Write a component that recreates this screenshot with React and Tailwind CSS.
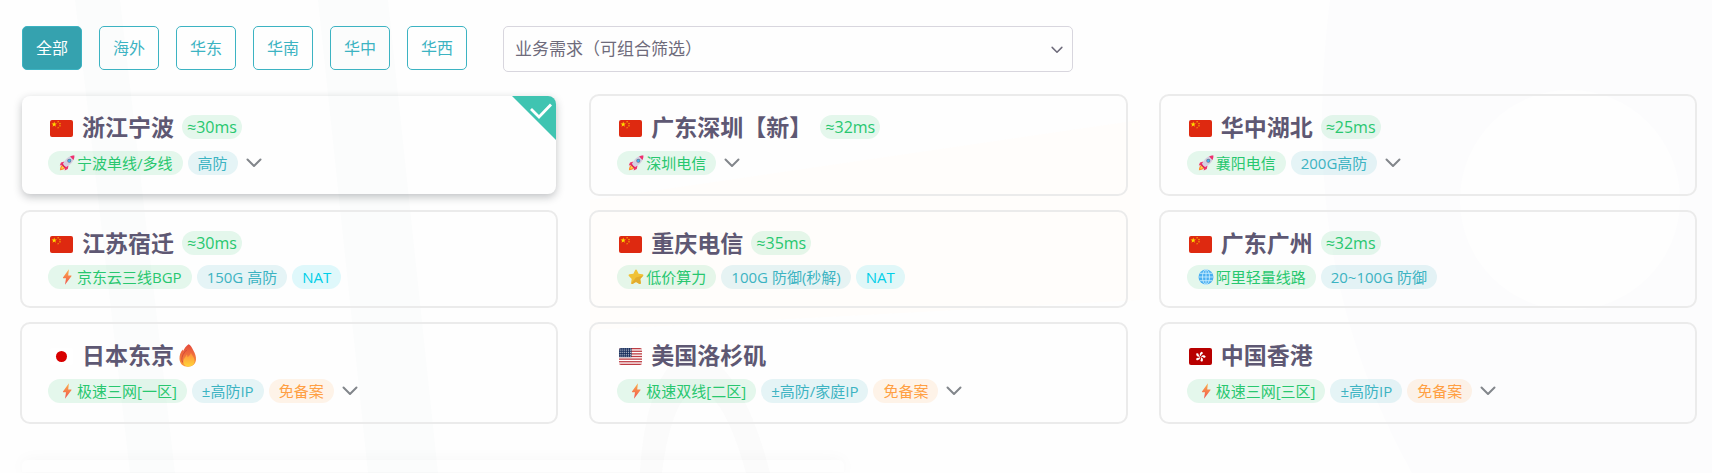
import { useState } from 'react';

const REGIONS = ['全部', '海外', '华东', '华南', '华中', '华西'];

const NODES = [
    { name: '浙江宁波', flag: 'cn', ping: '≈30ms', more: true, tags: [['宁波单线/多线', 'green', 'rocket'], ['高防', 'teal']] },
    { name: '广东深圳【新】', flag: 'cn', ping: '≈32ms', more: true, tags: [['深圳电信', 'green', 'rocket']] },
    { name: '华中湖北', flag: 'cn', ping: '≈25ms', more: true, tags: [['襄阳电信', 'green', 'rocket'], ['200G高防', 'teal']] },
    { name: '江苏宿迁', flag: 'cn', ping: '≈30ms', tags: [['京东云三线BGP', 'green', 'bolt'], ['150G 高防', 'teal'], ['NAT', 'cyan']] },
    { name: '重庆电信', flag: 'cn', ping: '≈35ms', tags: [['低价算力', 'green', 'star'], ['100G 防御(秒解)', 'teal'], ['NAT', 'cyan']] },
    { name: '广东广州', flag: 'cn', ping: '≈32ms', tags: [['阿里轻量线路', 'green', 'globe'], ['20~100G 防御', 'teal']] },
    { name: '日本东京', flag: 'jp', hot: true, more: true, tags: [['极速三网[一区]', 'green', 'bolt'], ['±高防IP', 'teal'], ['免备案', 'orange']] },
    { name: '美国洛杉矶', flag: 'us', more: true, tags: [['极速双线[二区]', 'green', 'bolt'], ['±高防/家庭IP', 'teal'], ['免备案', 'orange']] },
    { name: '中国香港', flag: 'hk', more: true, tags: [['极速三网[三区]', 'green', 'bolt'], ['±高防IP', 'teal'], ['免备案', 'orange']] },
];

const TONES = {
    green: 'bg-[#28c76f]/12 text-[#28c76f]',
    teal: 'bg-[#35b0c0]/12 text-[#3cb3c2]',
    cyan: 'bg-[#00cfe8]/12 text-[#00cfe8]',
    orange: 'bg-[#ff9f43]/12 text-[#ff9f43]',
};

const STAR = 'M0-1 .225-.309 .951-.309 .363.118 .588.809 0 .382-.588.809-.363.118-.951-.309-.225-.309Z';

function Flag({ country }) {
    return (
        <svg className="mt-[3px] w-[23px] h-[17px] shrink-0 rounded-[2px]" viewBox="0 0 23 17" aria-hidden="true">
            {country === 'cn' && (
                <>
                    <rect width="23" height="17" fill="#de2910" />
                    <g fill="#ffde00">
                        <path d={STAR} transform="translate(4.2 4.3) scale(2.9)" />
                        <path d={STAR} transform="translate(8.1 1.8) scale(1)" />
                        <path d={STAR} transform="translate(10 3.6) scale(1)" />
                        <path d={STAR} transform="translate(10 5.9) scale(1)" />
                        <path d={STAR} transform="translate(8.1 7.7) scale(1)" />
                    </g>
                </>
            )}
            {country === 'jp' && (
                <>
                    <rect width="23" height="17" fill="#fff" />
                    <circle cx="11.5" cy="8.5" r="5.5" fill="#d80000" />
                </>
            )}
            {country === 'us' && (
                <>
                    <rect width="23" height="17" fill="#fff" />
                    {[0, 1, 2, 3, 4, 5, 6].map((i) => (
                        <rect key={i} y={i * 2.615} width="23" height="1.308" fill="#bd3d44" />
                    ))}
                    <rect width="12.5" height="9.15" fill="#192f5d" />
                    {[0, 1, 2, 3, 4].map((row) =>
                        [0, 1, 2, 3, 4, 5].map((col) => (
                            <circle key={`${row}-${col}`} cx={1.1 + col * 2.05} cy={1 + row * 1.75} r=".5" fill="#fff" />
                        ))
                    )}
                </>
            )}
            {country === 'hk' && (
                <>
                    <rect width="23" height="17" fill="#b80000" />
                    {[0, 72, 144, 216, 288].map((angle) => (
                        <path key={angle} d="M0-.5C-1.8-1.6-1.8-4.200.2-5.200 1.300-4.900 1.700-3.800 1.200-3 .3-2.800.2-1.600 0-.5Z" transform={`translate(11.5 8.7) rotate(${angle + 14})`} fill="#fff" />
                    ))}
                </>
            )}
        </svg>
    );
}

function TagIcon({ kind }) {
    return (
        <svg className="size-4 shrink-0" viewBox="0 0 16 16" aria-hidden="true">
            {kind === 'rocket' && (
                <>
                    <path d="M5.5 6.5 2 7.5.8 10.5l3.5-.7ZM9.5 10.5 8.8 14 5.7 15.4l.6-3.8Z" fill="#f0306e" />
                    <path d="M3.8 9.6C2 10.3 1 12.6.9 15.2c2.5 0 4.8-1 5.6-2.7Z" fill="#ff8a2b" />
                    <path d="M3.8 11c-1 .5-1.5 1.6-1.6 2.8 1.3 0 2.4-.5 2.9-1.4Z" fill="#ffd54a" />
                    <path d="M15.4.6C11 .5 7 3 4 8.8L7.2 12C13 9 15.5 5 15.4.6Z" fill="#d5cee0" />
                    <path d="M15.4.6c-1.6 0-3 .2-4.3.9l3.4 3.4c.7-1.4 1-2.8.9-4.3Z" fill="#f0306e" />
                    <path d="m3.6 8.8 3.6 3.6-1.3.9L2.7 10Z" fill="#d62563" />
                    <circle cx="10.3" cy="5.7" r="2" fill="#6c7790" />
                    <circle cx="10.3" cy="5.7" r="1.3" fill="#43b4f2" />
                </>
            )}
            {kind === 'bolt' && (
                <>
                    <defs>
                        <linearGradient id="bolt" x1="0" y1="0" x2="0" y2="1">
                            <stop offset="0" stopColor="#fcb04a" />
                            <stop offset="1" stopColor="#f0504e" />
                        </linearGradient>
                    </defs>
                    <path d="M9.900.3 4 8.500c-.2.400 0 .8.400.8h2.600L6 15.800l6.400-8.500c.3-.4.100-.9-.4-.9H9.200Z" fill="url(#bolt)" />
                </>
            )}
            {kind === 'star' && (
                <>
                    <path d="M7.100 1.200c.4-.8 1.400-.8 1.800 0l1.700 3.500 3.900.6c.9.100 1.200 1.200.6 1.800l-2.800 2.800.6 3.900c.1.900-.8 1.500-1.500 1.100L8 13l-3.400 1.900c-.8.400-1.700-.2-1.500-1.100l.6-3.900L.9 7.100c-.6-.6-.3-1.700.6-1.800l3.900-.6Z" fill="#f0c236" />
                    <path d="M8 8.600 15.200 6.600 12.300 9.900l.6 3.900c.1.900-.8 1.500-1.500 1.100L8 13l-3.400 1.900c-.5.200-1 .1-1.300-.3Z" fill="#d99d26" opacity=".6" />
                </>
            )}
            {kind === 'globe' && (
                <>
                    <circle cx="8" cy="8" r="7.5" fill="#4aaef0" />
                    <g fill="none" stroke="#c4ecff" strokeWidth=".9">
                        <ellipse cx="8" cy="8" rx="3.5" ry="7.5" />
                        <path d="M8 .5v15M.5 8h15M1.700 4.300h12.600M1.700 11.700h12.600" />
                    </g>
                </>
            )}
        </svg>
    );
}

function Flame() {
    return (
        <svg className="w-[18px] h-[23px] shrink-0" viewBox="0 0 18 23" role="img" aria-label="热门">
            <defs>
                <linearGradient id="flame" x1="0" y1="0" x2="0" y2="1">
                    <stop offset="0" stopColor="#e5493c" />
                    <stop offset="1" stopColor="#fb9a3c" />
                </linearGradient>
                <linearGradient id="flameCore" x1="0" y1="0" x2="0" y2="1">
                    <stop offset="0" stopColor="#ff8c3a" />
                    <stop offset="1" stopColor="#ffd43a" />
                </linearGradient>
            </defs>
            <path d="M9.500.3c2 .5 3.500 3.500 5 6.500 1.500 2.800 2.700 5.500 2.500 8.700-.3 4.300-3.500 7.200-8 7.200-5 0-8.300-3-8.500-8C.4 11.500 1.500 8 3.800 5.500c.2.500.2 1 .1 1.700C5.500 4.500 7 2 9.500.3Z" fill="url(#flame)" />
            <path d="M3.700 18.500C1.500 14 4 9.500 7.700 6" fill="none" stroke="#cf4339" strokeWidth=".9" />
            <path d="M12 8.500c.3 2.500 3.600 4.500 3.600 8.800 0 3-2.400 5.200-5.800 5.200s-5.500-2-5.500-5c0-3 2.500-4.300 3.400-7 .6.800.8 1.800.8 2.700C10.200 12.300 11.500 10.500 12 8.500Z" fill="url(#flameCore)" />
        </svg>
    );
}

function Chevron({ className }) {
    return (
        <svg className={className} viewBox="0 0 16 10" fill="none" stroke="currentColor" strokeWidth="2" strokeLinecap="round" strokeLinejoin="round" aria-hidden="true">
            <path d="m1.500 1.500 6.500 6.500 6.500-6.500" />
        </svg>
    );
}

function Tag({ text, tone, icon }) {
    return (
        <span className={`flex items-center gap-0.5 h-6 rounded-full text-[15px] leading-6 whitespace-nowrap ${icon ? 'pl-[11px] pr-2.5' : 'px-2.5'} ${TONES[tone]}`}>
            {icon && <TagIcon kind={icon} />}
            {text}
        </span>
    );
}

function NodeCard({ node, selected, onSelect }) {
    return (
        <label
            className={`relative block cursor-pointer rounded-[10px] border-2 pt-[19px] pb-[17px] pl-[26px] pr-4 ${
                selected ? 'border-transparent' : 'border-[#ebebeb]'
            }`}
        >
            {selected && <span className="absolute inset-0 rounded-lg shadow-[0_3px_8px_rgba(34,41,47,0.28)]" />}
            <input type="radio" name="node" className="sr-only" checked={selected} onChange={onSelect} aria-label={node.name} />
            {selected && (
                <svg className="absolute top-0 right-0 size-11 rounded-tr-lg" viewBox="0 0 44 44" aria-hidden="true">
                    <path d="M0 0h44v44Z" fill="#3fc4b1" />
                    <path d="m19 13 8 8L39 8.500" fill="none" stroke="#fff" strokeWidth="2.8" />
                </svg>
            )}
            <div className="flex items-center h-6 pl-0.5">
                <Flag country={node.flag} />
                <h3 className={`ml-[9px] text-[23px] leading-6 font-bold text-[#5e5873] whitespace-nowrap ${node.hot ? 'mr-[5px]' : 'mr-2'}`}>{node.name}</h3>
                {node.hot && <Flame />}
                {node.ping && <span className="h-6 px-[5px] rounded-full text-base leading-6 bg-[#28c76f]/12 text-[#28c76f]">{node.ping}</span>}
            </div>
            <div className="mt-2.5 flex items-center gap-[5px]">
                {node.tags.map(([text, tone, icon]) => (
                    <Tag key={text} text={text} tone={tone} icon={icon} />
                ))}
                {node.more && (
                    <button type="button" className="flex items-center h-7 px-[3px] text-[#82868b] cursor-pointer" aria-label="展开线路">
                        <Chevron className="w-4 h-2.5" />
                    </button>
                )}
            </div>
        </label>
    );
}

// Faint shapes behind the whole page
function Backdrop() {
    return (
        <svg className="absolute inset-0 -z-10 size-full" viewBox="0 0 1712 473" preserveAspectRatio="none" aria-hidden="true">
            <rect width="1712" height="473" fill="#fefefe" />
            <path d="M75 0h45l55 473h-45ZM318 0h70l50 473h-70Z" fill="#fbfcfc" />
            <path d="M590 200 1140 120V300L590 330Z" fill="#fffdfb" />
            <path d="M1330 0h382v473h-300c-60-110-110-250-82-473Z" fill="#fcfcfd" />
            <circle cx="1570" cy="200" r="110" fill="#fefefe" />
            <path d="M640 473c10-160 90-160 130 0h-24c-30-110-70-110-84 0Z" fill="#fbfbfb" />
        </svg>
    );
}

export default function App() {
    const [region, setRegion] = useState(REGIONS[0]);
    const [current, setCurrent] = useState(NODES[0].name);

    return (
        <main className="relative isolate min-h-screen overflow-hidden pt-[26px] pl-5 pr-[15px] font-['Open_Sans','Noto_Sans_CJK_SC',sans-serif]">
            <Backdrop />
            <div className="flex items-start pl-0.5">
                <div className="flex gap-[17px]">
                    {REGIONS.map((name) => (
                        <button
                            key={name}
                            type="button"
                            onClick={() => setRegion(name)}
                            className={`w-15 h-11 rounded-[5px] border text-base leading-5 cursor-pointer ${
                                name === region ? 'bg-[#35a2af] border-[#3cb3c2] text-white' : 'border-[#3cb3c2] text-[#3cb3c2]'
                            }`}
                        >
                            {name}
                        </button>
                    ))}
                </div>
                <div className="relative ml-9 w-[34%]">
                    <select aria-label="业务需求" className="appearance-none w-full h-[46px] rounded-[5px] border border-[#d8d6de] pl-[11px] pr-8 text-[17px] text-[#6e6b7b] bg-transparent">
                        <option>业务需求（可组合筛选）</option>
                    </select>
                    <Chevron className="absolute right-2.5 top-5 w-3 h-2 text-[#6e6b7b] pointer-events-none" />
                </div>
            </div>

            <div className="mt-[22px] grid grid-cols-3 gap-x-[31px] gap-y-3.5">
                {NODES.map((node) => (
                    <NodeCard key={node.name} node={node} selected={node.name === current} onSelect={() => setCurrent(node.name)} />
                ))}
            </div>

            <section className="mt-9 ml-0.5 h-3 w-[49%] rounded-t-md shadow-[0_0_16px_rgba(34,41,47,0.04)]" />
        </main>
    );
}
